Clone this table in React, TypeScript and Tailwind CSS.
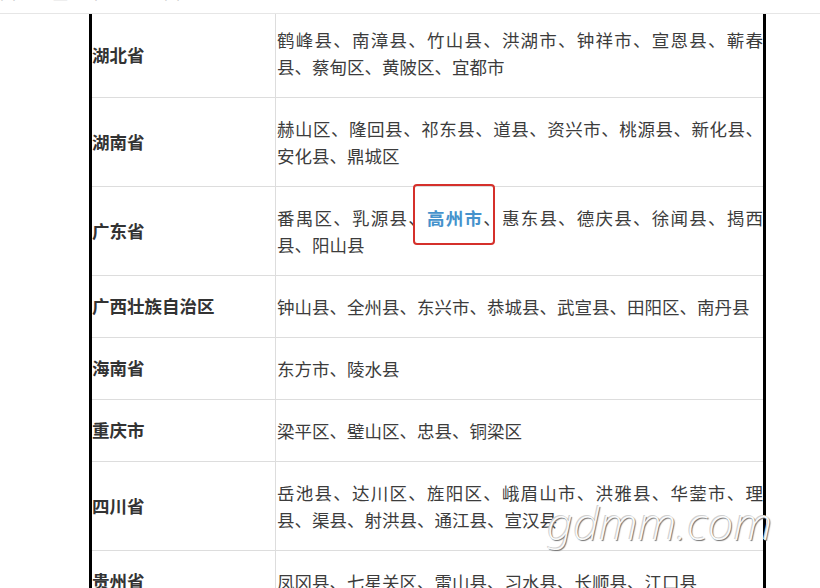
const rows = [
  {
    name: "湖北省",
    text: "鹤峰县、南漳县、竹山县、洪湖市、钟祥市、宣恩县、蕲春县、蔡甸区、黄陂区、宜都市",
    first: true,
  },
  { name: "湖南省", text: "赫山区、隆回县、祁东县、道县、资兴市、桃源县、新化县、安化县、鼎城区" },
  { name: "广东省", text: "", highlight: true },
  { name: "广西壮族自治区", text: "钟山县、全州县、东兴市、恭城县、武宣县、田阳区、南丹县" },
  { name: "海南省", text: "东方市、陵水县" },
  { name: "重庆市", text: "梁平区、璧山区、忠县、铜梁区" },
  { name: "四川省", text: "岳池县、达川区、旌阳区、峨眉山市、洪雅县、华蓥市、理县、渠县、射洪县、通江县、宣汉县" },
  { name: "贵州省", text: "凤冈县、七星关区、雷山县、习水县、长顺县、江口县" },
];

const font = "font-['Noto_Sans_CJK_SC','Noto_Sans',sans-serif]";

export default function App() {
  return (
    <div className={`relative w-[820px] h-[588px] overflow-hidden bg-white ${font}`}>
      {/* 顶部被裁掉的一行 */}
      <div className="h-[14px] overflow-hidden border-b border-[#e6e6e6]">
        <div className="-mt-[17px] flex gap-[20px] pl-0 text-[16px] leading-[18px] text-[#c4c4c4]">
          <span>国</span>
          <span>地区</span>
          <span>丨</span>
          <span className="pl-[40px]">图</span>
        </div>
      </div>

      <div className="ml-[89px] w-[677px] border-x-[3px] border-black">
        {rows.map((r) => (
          <div
            key={r.name}
            className="relative grid grid-cols-[183px_1fr] border-b border-[#dddddd]"
          >
            <div className="flex items-center text-[17.5px] font-bold text-[#333]">
              {r.name}
            </div>
            <div
              className={`border-l border-[#dddddd] pl-[1px] pb-[17px] text-[17.5px] leading-[27px] text-[#3c3c3c] text-justify ${
                r.first ? "pt-[12px]" : "pt-[17px]"
              }`}
            >
              {r.highlight ? (
                <>
                  番禺区、乳源县、
                  <span className="font-bold text-[#4592cc]">高州市</span>
                  、惠东县、德庆县、徐闻县、揭西县、阳山县
                </>
              ) : (
                r.text
              )}
            </div>
            {r.highlight && (
              <div className="absolute left-[321px] top-[-3px] z-10 h-[61px] w-[82px] rounded-[4px] border-[2.5px] border-[#d5302b]" />
            )}
          </div>
        ))}
      </div>

      {/* 水印 */}
      <div className="absolute left-[547px] top-[493px] z-20 font-['Noto_Sans',sans-serif] text-[45px] font-extralight italic leading-[60px] tracking-[0.5px] text-[#fafafa] [text-shadow:1px_1px_1px_#6e6e6e,-1px_-1px_0_#d0d0d0]">
        gdmm.com
      </div>
    </div>
  );
}
